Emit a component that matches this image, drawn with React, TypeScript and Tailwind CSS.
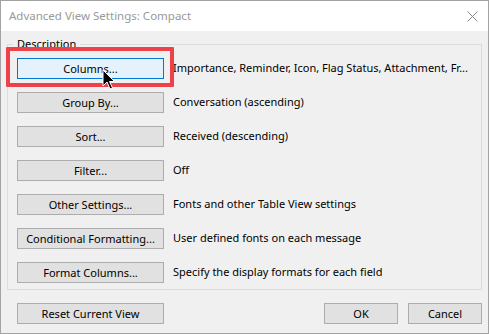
import React from "react";

const rows = [
  { label: "Columns...", text: "Importance, Reminder, Icon, Flag Status, Attachment, Fr...", active: true },
  { label: "Group By...", text: "Conversation (ascending)" },
  { label: "Sort...", text: "Received (descending)" },
  { label: "Filter...", text: "Off" },
  { label: "Other Settings...", text: "Fonts and other Table View settings" },
  { label: "Conditional Formatting...", text: "User defined fonts on each message" },
  { label: "Format Columns...", text: "Specify the display formats for each field" },
];

const Btn = ({ children, active, w = "w-[147px]" }: { children: React.ReactNode; active?: boolean; w?: string }) => (
  <button
    type="button"
    className={`${w} h-[21px] shrink-0 border flex items-center justify-center leading-none text-black ${
      active ? "border-[#0078d7] bg-[#e5f1fb]" : "border-[#adadad] bg-[#e1e1e1]"
    }`}
  >
    {children}
  </button>
);

const App = () => {
  return (
    <div className="relative w-[489px] h-[334px] border border-[#a3a3a3] bg-[#f0f0f0] flex flex-col font-['Noto_Sans',sans-serif] text-[11px] text-black">
      <div className="h-[30px] bg-white flex items-center justify-between pl-[8px] pr-[10px] text-[#999999] text-[11.5px]">
        <span>Advanced View Settings: Compact</span>
        <svg width="11" height="11" viewBox="0 0 11 11">
          <path d="M0.5 0.5 L10.5 10.5 M10.5 0.5 L0.5 10.5" stroke="#8a8a8a" strokeWidth="1" />
        </svg>
      </div>
      <div className="px-[6px] pt-[5px]">
        <fieldset className="border border-[#dcdcdc] pl-[9px] pt-[6px] pb-[6px]">
          <legend className="-ml-[4px] px-[4px] leading-[16px]">Description</legend>
          <div className="flex flex-col gap-[13px]">
            {rows.map((r) => (
              <div key={r.label} className="flex items-center">
                <Btn active={r.active}>{r.label}</Btn>
                <span className="ml-[9px] whitespace-nowrap">{r.text}</span>
              </div>
            ))}
          </div>
        </fieldset>
        <div className="mt-[13px] pl-[10px] flex items-center justify-between">
          <Btn>Reset Current View</Btn>
          <div className="flex gap-[10px]">
            <Btn w="w-[74px]">OK</Btn>
            <Btn w="w-[74px]">Cancel</Btn>
          </div>
        </div>
      </div>

      <div className="absolute left-[5px] top-[46px] w-[168px] h-[40px] border-[4px] border-[#ee4149] rounded-[1px] pointer-events-none" />
      <svg className="absolute left-[101px] top-[68px]" width="14" height="22" viewBox="0 0 14 22">
        <path d="M1 1 L1 17 L5 13 L8 20 L10.5 19 L7.5 12.5 L12.5 12.5 Z" fill="#000" stroke="#fff" strokeWidth="1" strokeLinejoin="round" />
      </svg>
    </div>
  );
};

export default App;
